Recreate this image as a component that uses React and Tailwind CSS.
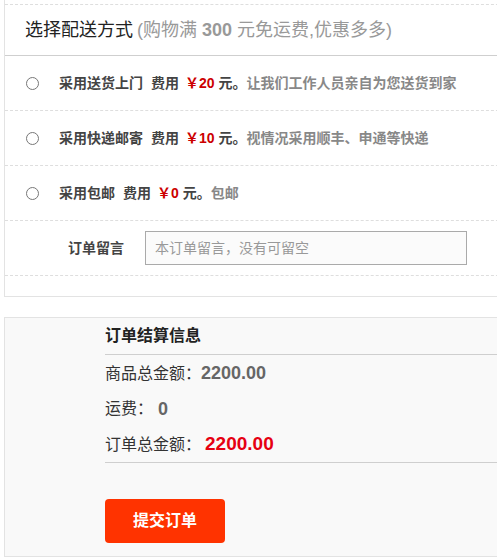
import React from "react";

const F = { fontFamily: '"Liberation Sans", Arial, "Noto Sans CJK SC", sans-serif' };

function Radio() {
  return (
    <span className="w-[13px] h-[13px] rounded-full border border-[#777] bg-white shrink-0 inline-block" />
  );
}

function Row({ name, fee, desc }) {
  return (
    <div className="h-[55px] flex items-center border-b border-dashed border-[#dedede] pl-[21px]">
      <Radio />
      <div className="ml-[20px] text-[14px] font-bold text-[#444] whitespace-nowrap">
        <span>{name}</span>
        <span className="ml-[8px]">费用</span>
        <span className="ml-[6px] text-[#cc0000]">￥{fee}</span>
        <span className="ml-[4px]">元。</span>
        <span className="text-[#888]">{desc}</span>
      </div>
    </div>
  );
}

export default function App() {
  return (
    <div className="w-[497px] h-[560px] bg-white overflow-hidden pl-[4px]" style={F}>
      <div className="w-[520px] border-l border-b border-[#e3e3e3] pt-[4px] h-[297px]">
        <div className="border-t border-dashed border-[#dedede]">
          <div className="h-[51px] flex items-center pl-[20px] border-b border-[#cfcfcf] whitespace-nowrap">
            <span className="text-[18px] text-[#222]">选择配送方式</span>
            <span className="text-[18px] text-[#999] ml-[4px]">
              (购物满 <b>300</b> 元免运费,优惠多多)
            </span>
          </div>
          <Row name="采用送货上门" fee="20" desc="让我们工作人员亲自为您送货到家" />
          <Row name="采用快递邮寄" fee="10" desc="视情况采用顺丰、申通等快递" />
          <Row name="采用包邮" fee="0" desc="包邮" />
          <div className="h-[55px] flex items-center border-b border-dashed border-[#dedede]">
            <span className="ml-[63px] w-[77px] text-[14px] font-bold text-[#444]">订单留言</span>
            <div className="w-[322px] h-[34px] border border-[#aaaaaa] bg-[#fbfbfb] flex items-center pl-[9px] text-[14px] text-[#999]">
              本订单留言，没有可留空
            </div>
          </div>
        </div>
      </div>

      <div className="mt-[20px] w-[520px] h-[240px] border-t border-l border-b border-[#e3e3e3] bg-[#f9f9f9] pl-[100px]">
        <div className="h-[37px] flex items-center border-b border-[#cfcfcf] text-[16px] font-bold text-[#222]">
          订单结算信息
        </div>
        <div className="h-[36px] flex items-center text-[16px] text-[#333] pt-[1px]">
          商品总金额：<span className="text-[18px] font-bold text-[#666]">2200.00</span>
        </div>
        <div className="h-[36px] flex items-center text-[16px] text-[#333]">
          运费：<span className="ml-[5px] text-[18px] font-bold text-[#666]">0</span>
        </div>
        <div className="h-[36px] flex items-center border-b border-[#cfcfcf] text-[16px] text-[#333]">
          订单总金额：<span className="ml-[4px] text-[19px] font-bold text-[#e60012]">2200.00</span>
        </div>
        <div className="mt-[36px] w-[120px] h-[44px] rounded-[4px] bg-[#ff3300] flex items-center justify-center text-white text-[16px] font-bold">
          提交订单
        </div>
      </div>
    </div>
  );
}
